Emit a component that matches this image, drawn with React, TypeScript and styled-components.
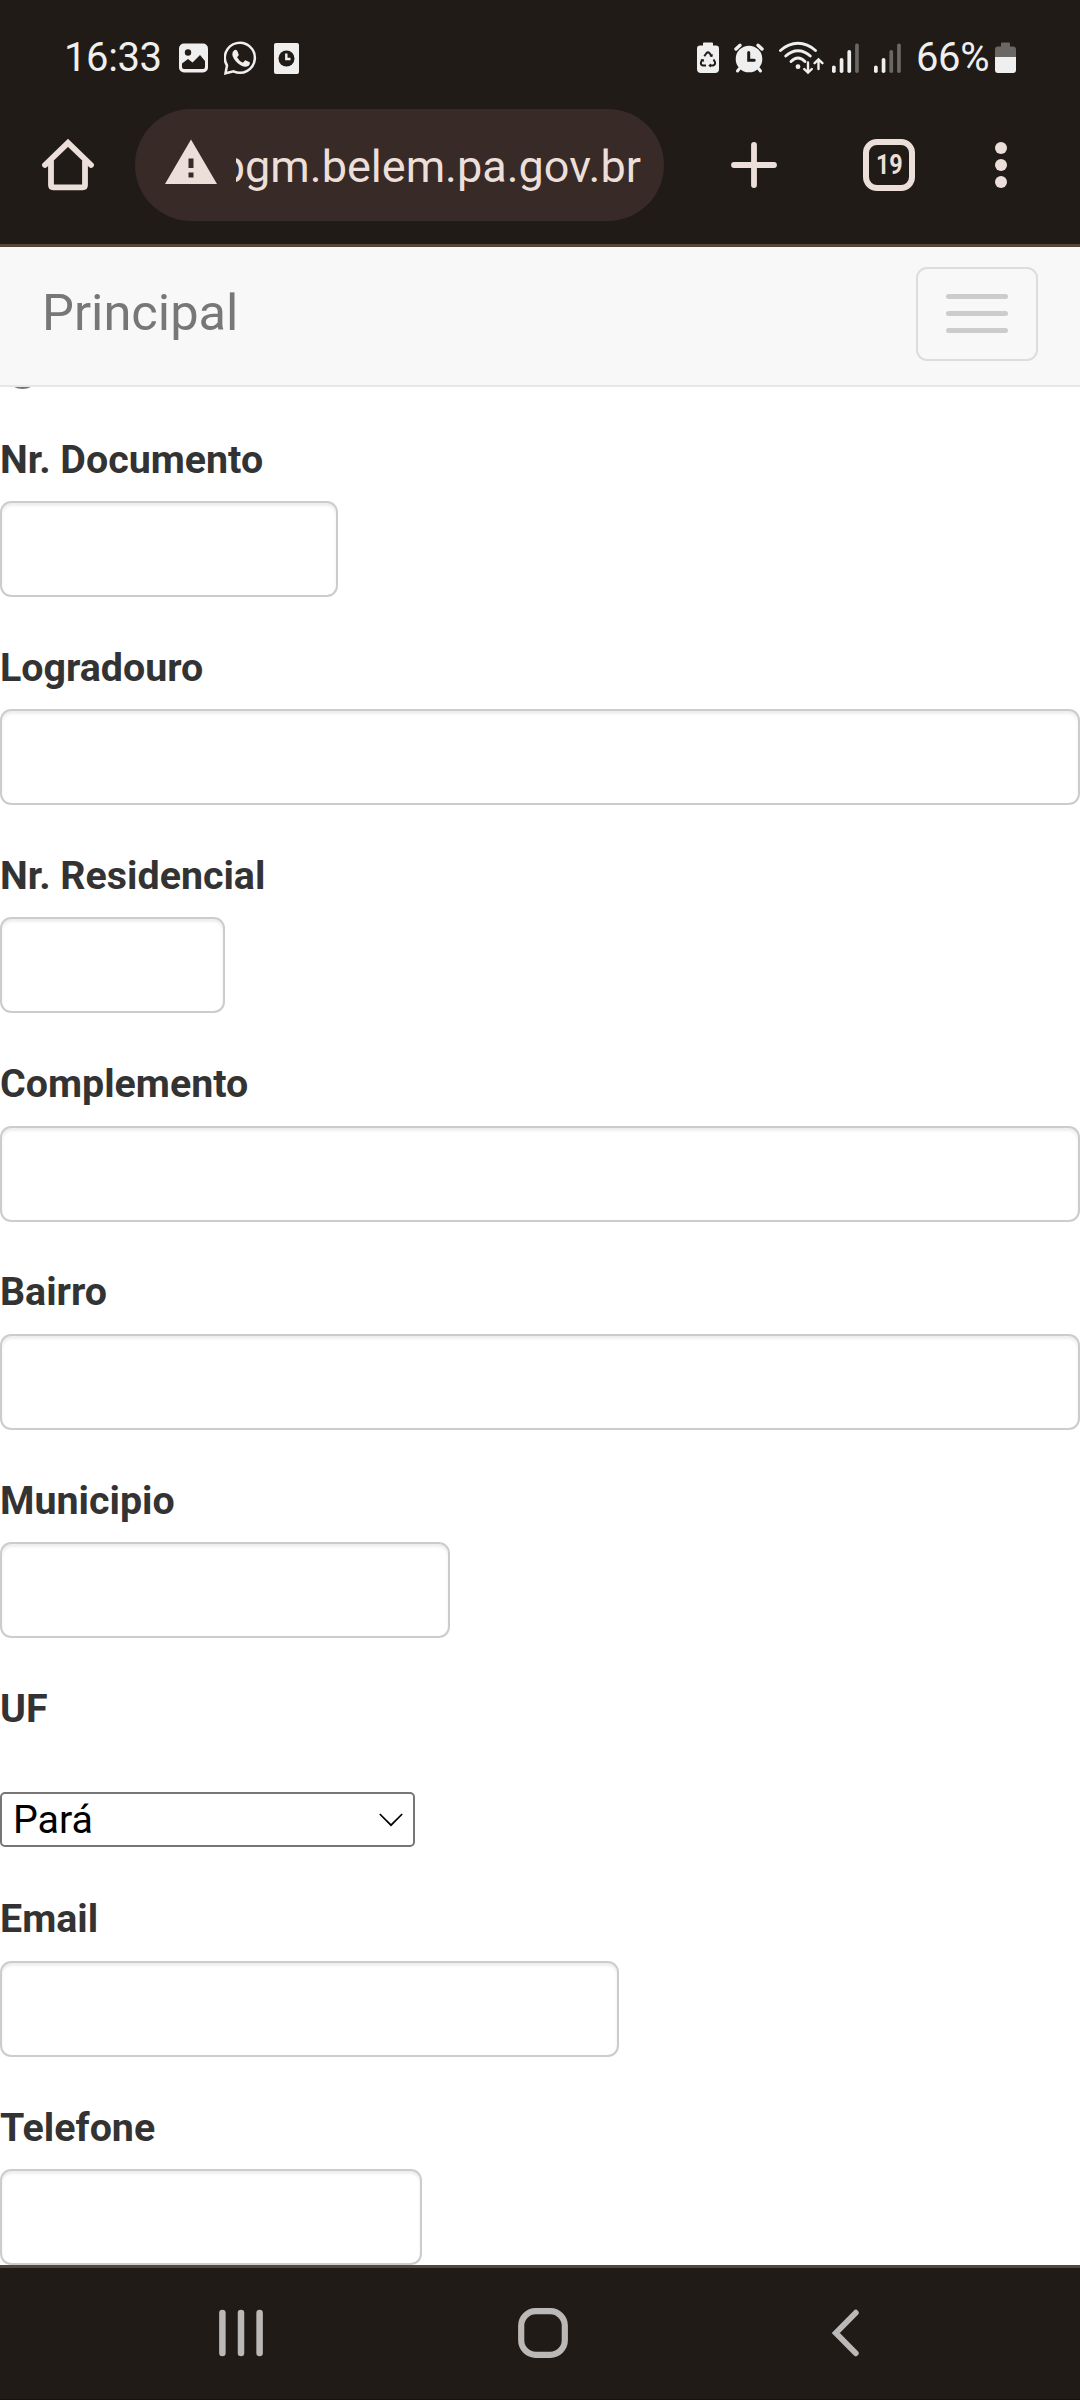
import React from 'react';
import styled, { createGlobalStyle } from 'styled-components';

const INK = '#efefef';
const CHROME = '#211b18';
const TINT = '#ecdfda';
const FAINT = '#6b6765';

const GlobalStyle = createGlobalStyle`
  *, *::before, *::after { box-sizing: border-box; }
  body {
    margin: 0;
    background: #fff;
    font-family: Roboto, "Noto Sans", sans-serif;
  }
  svg { display: block; flex: none; }
`;

const Screen = styled.div`
  width: 1080px;
  height: 2400px;
  display: flex;
  flex-direction: column;
  overflow: hidden;
  background: #fff;
`;

const StatusBar = styled.header`
  flex: none;
  height: 109px;
  padding: 36px 64px 0 64px;
  display: flex;
  justify-content: space-between;
  align-items: flex-start;
  background: ${CHROME};
`;

const StatusGroup = styled.div<{ $gap: number }>`
  height: 44px;
  display: flex;
  align-items: center;
  gap: ${(p) => p.$gap}px;
`;

const StatusText = styled.span<{ $width: number }>`
  width: ${(p) => p.$width}px;
  font-size: 40px;
  line-height: 44px;
  letter-spacing: -0.4px;
  white-space: nowrap;
  color: ${INK};
`;

const WifiSlot = styled.span`
  margin-right: -7px;
`;

const Toolbar = styled.div`
  flex: none;
  height: 138px;
  padding-left: 42px;
  display: flex;
  align-items: flex-start;
  background: ${CHROME};
  border-bottom: 3px solid #54453f;
`;

const ToolButton = styled.button<{ $width: number; $left: number }>`
  flex: none;
  width: ${(p) => p.$width}px;
  height: 112px;
  margin: 0 0 0 ${(p) => p.$left}px;
  padding: 0;
  border: 0;
  background: none;
  display: flex;
  align-items: center;
  justify-content: center;
`;

const AddressPill = styled.div`
  flex: none;
  width: 529px;
  height: 112px;
  margin-left: 41px;
  padding: 0 23px 0 30px;
  border-radius: 56px;
  background: #382a26;
  display: flex;
  align-items: center;
`;

const Address = styled.div`
  flex: 1;
  min-width: 0;
  margin-left: 19px;
  padding-top: 4px;
  display: flex;
  justify-content: flex-end;
  overflow: hidden;
  font-size: 45px;
  line-height: 60px;
  white-space: nowrap;
  color: ${TINT};
`;

const TabCount = styled.span`
  width: 52px;
  height: 52px;
  border: 6px solid ${TINT};
  border-radius: 14px;
  display: flex;
  align-items: center;
  justify-content: center;
  font-family: Roboto, sans-serif;
  font-size: 28.5px;
  font-weight: 700;
  line-height: 40px;
  color: ${TINT};
`;

const TabDigits = styled.span`
  transform: scaleX(0.82);
`;

const Page = styled.main`
  flex: 1;
  min-height: 0;
  overflow: hidden;
  color: #333;
`;

const SiteNav = styled.nav`
  height: 140px;
  padding: 0 42px;
  display: flex;
  align-items: flex-start;
  justify-content: space-between;
  background: #f8f8f8;
  border-bottom: 2px solid #e7e7e7;
`;

const Brand = styled.span`
  padding-top: 38.4px;
  font-size: 50.625px;
  line-height: 56px;
  color: #777;
`;

const Burger = styled.button`
  width: 122px;
  height: 94px;
  margin: 20px 0 0;
  padding: 0 0 2px;
  display: flex;
  flex-direction: column;
  align-items: center;
  justify-content: center;
  gap: 12px;
  background: none;
  border: 2px solid #ddd;
  border-radius: 11px;
`;

const BurgerLine = styled.span`
  width: 62px;
  height: 5px;
  border-radius: 2.5px;
  background: #ccc;
`;

const RadioStrip = styled.div`
  height: 43.8px;
  display: flex;
  align-items: flex-end;
  padding: 0 0 41.8px 4px;
  overflow: hidden;
`;

const RadioDot = styled.span`
  flex: none;
  width: 37px;
  height: 37px;
  border: 3px solid #767676;
  border-radius: 50%;
`;

const Group = styled.div`
  height: 165.96px;
  margin-bottom: 42.19px;
`;

const SelectGroup = styled(Group)`
  height: 168.6px;
`;

const Label = styled.label`
  display: block;
  margin-bottom: 13.31px;
  font-size: 39.375px;
  font-weight: 700;
  line-height: 57px;
`;

const Input = styled.input<{ $width: string }>`
  display: block;
  width: ${(p) => p.$width};
  height: 96px;
  padding: 17px 34px;
  font: 39.375px Roboto, sans-serif;
  color: #555;
  background: #fff;
  border: 2px solid #ccc;
  border-radius: 11.25px;
  outline: none;
  box-shadow: inset 0 2.8px 2.8px rgba(0, 0, 0, 0.075);
`;

const SelectBox = styled.div`
  width: 415px;
  height: 54.5px;
  margin-top: 55.8px;
  padding: 0 10px 0 11px;
  display: flex;
  align-items: center;
  border: 2px solid #767676;
  border-radius: 5px;
  background: #fff;
`;

const Select = styled.select`
  flex: 1;
  height: 50px;
  padding: 0;
  border: 0;
  outline: none;
  appearance: none;
  background: none;
  font: 39.375px/50px Roboto, sans-serif;
  color: #000;
`;

const SystemNav = styled.footer`
  flex: none;
  height: 135px;
  padding: 40px 219px 0;
  display: grid;
  grid-template-columns: 299px 313px 30px;
  align-items: start;
  background: ${CHROME};
  border-top: 3px solid #54463f;
  border-bottom: 1px solid #170f11;
`;

const PictureIcon = () => (
  <svg width="29" height="30" viewBox="0 0 29 30">
    <rect y="0.5" width="29" height="29" rx="5" fill={INK} />
    <circle cx="9" cy="9.5" r="3.2" fill={CHROME} />
    <path d="M3 20.5 9 16l4.500 3.500L21 12l5 6v6q0 2-2 2H5q-2 0-2-2z" fill={CHROME} />
  </svg>
);

const ChatIcon = () => (
  <svg width="34" height="34" viewBox="0 0 34 34" fill="none">
    <path d="M3 24.500A15 15 0 1 1 9.600 30.400L1.500 32.300z" stroke={INK} strokeWidth="2.500" />
    <path
      d="M10.200 9.300q1-.8 2.200-.3.600.3.900 1l1.400 3.400q.2.700-.4 1.400l-1.200 1.500q1.900 3.800 5.800 5.400l1.800-2q.5-.6 1.200-.3l3.400 1.600q.8.400.6 1.300-.6 3.100-3.900 3.400-4.300.2-8.500-3.700Q8.700 17.200 8.300 13.400q-.1-2.500 1.900-4.100z"
      fill={INK}
    />
  </svg>
);

const ClockCardIcon = () => (
  <svg width="25" height="31" viewBox="0 0 25 31">
    <rect width="25" height="31" rx="2" fill={INK} />
    <circle cx="12.500" cy="15.500" r="8" fill={CHROME} />
    <path d="M12.300 10.500v5.500h4.200" fill="none" stroke={INK} strokeWidth="2.400" />
  </svg>
);

const RecycleBatteryIcon = () => (
  <svg width="22" height="32" viewBox="0 0 22 32">
    <path d="M6 1.500q0-1 1-1h8q1 0 1 1v2h3q3 0 3 3V27q0 4-4 4H4q-4 0-4-4V6.500q0-3 3-3h3z" fill={INK} />
    <g fill="none" stroke={CHROME} strokeWidth="2" strokeLinejoin="round">
      <path d="M7.300 14.300 9.600 11q1.400-1.300 2.800 0l2.300 3.200" />
      <path d="M16.600 17.500 18 20.200q.6 2.800-2.300 3.300h-3" />
      <path d="M9 23.500H6q-2.700-.6-2-3.200l1.500-2.800" />
    </g>
    <path d="M3.300 17.800l3.300-.8.600 3zM14 21.500v4l-2.800-2zM15.800 12l-.5 3.300-3-1.200z" fill={CHROME} />
  </svg>
);

const AlarmIcon = () => (
  <svg width="30" height="30" viewBox="0 0 30 30" fill="none" stroke={INK} strokeLinecap="round">
    <circle cx="15" cy="16" r="13.300" fill={INK} stroke="none" />
    <path d="M2 6 6 2.300M28 6l-4-3.700" strokeWidth="3.400" />
    <path d="M5.500 25.500 3.500 28M24.500 25.500l2 2.500" strokeWidth="3" />
    <path d="M14.700 9.500v7.700h5.500" stroke={CHROME} strokeWidth="3" />
  </svg>
);

const WifiIcon = () => (
  <svg width="45" height="34" viewBox="0 0 45 34" fill="none" stroke={INK} strokeLinecap="round">
    <path d="M1.500 9.500Q9.500 2.200 19 2.200T36.500 9.500" strokeWidth="2.900" />
    <path d="M6.700 15Q12.500 9.700 19 9.700T31.300 15" strokeWidth="2.900" />
    <path d="M12 20.500Q15.500 17 19 17t7 3.500" strokeWidth="2.900" />
    <circle cx="19" cy="25.700" r="2.400" fill={INK} stroke="none" />
    <path d="M29 21.500v9M25.200 28l3.800 3.700 3.800-3.700M39.500 28v-9M35.600 22.200l3.900-3.800 3.900 3.800" strokeWidth="2.400" />
  </svg>
);

const BARS = [7.5, 15, 23, 29.5];

const SignalIcon = ({ level }: { level: number }) => (
  <svg width="27" height="30" viewBox="0 0 27 30">
    {BARS.map((h, i) => (
      <rect key={h} x={i * 7.7} y={30 - h} width="3.700" height={h} rx="1.800" fill={i < level ? INK : FAINT} />
    ))}
  </svg>
);

const BatteryIcon = () => (
  <svg width="21" height="32" viewBox="0 0 21 32">
    <path d="M6 1.500q0-1 1-1h7q1 0 1 1v3h3q3 0 3 3V15H0V7.500q0-3 3-3h3z" fill={FAINT} />
    <path d="M0 15h21v13q0 3-3 3H3q-3 0-3-3z" fill={INK} />
  </svg>
);

const HomeIcon = () => (
  <svg width="52" height="52" viewBox="0 0 52 52" fill="none" stroke={TINT} strokeWidth="5.800">
    <path d="M3 26 26 3.800 49 26" strokeLinecap="round" />
    <path d="M9 21.500V46q0 2.300 2.300 2.300h29.400Q43 48.300 43 46V21.500" />
  </svg>
);

const WarningIcon = () => (
  <svg width="52" height="52" viewBox="0 0 52 52">
    <path d="M26 0.500 52 45H0z" fill={TINT} />
    <path d="M23.500 19.500h5v9.500h-5zM23.500 33.500h5v5h-5z" fill="#382a26" />
  </svg>
);

const PlusIcon = () => (
  <svg width="46" height="46" viewBox="0 0 46 46" stroke={TINT} strokeWidth="5.800" strokeLinecap="round">
    <path d="M23 3v40M3 23h40" />
  </svg>
);

const MoreIcon = () => (
  <svg width="12" height="46" viewBox="0 0 12 46" fill={TINT}>
    <circle cx="6" cy="6" r="6" />
    <circle cx="6" cy="23" r="6" />
    <circle cx="6" cy="40" r="6" />
  </svg>
);

const Chevron = () => (
  <svg width="24" height="14" viewBox="0 0 24 14" fill="none" stroke="#000" strokeWidth="1.700">
    <path d="M.8 1 12 12.200 23.200 1" />
  </svg>
);

const RecentsIcon = () => (
  <svg width="44" height="50" viewBox="0 0 44 50" stroke="#bbb9b7" strokeWidth="6.500" strokeLinecap="round">
    <path d="M3.400 4.900v40.200M22 4.900v40.200M40.600 4.900v40.200" />
  </svg>
);

const HomeKeyIcon = () => (
  <svg width="50" height="50" viewBox="0 0 50 50" fill="none" stroke="#bbb9b7" strokeWidth="6.200">
    <rect x="3.200" y="3.200" width="43.600" height="43.600" rx="14.500" />
  </svg>
);

const BackIcon = () => (
  <svg width="30" height="50" viewBox="0 0 30 50" fill="none" stroke="#bbb9b7" strokeWidth="5.800" strokeLinecap="round">
    <path d="M24.800 4.700 4.800 25l20 20.300" />
  </svg>
);

const Field = ({ label, width }: { label: string; width: string }) => (
  <Group>
    <Label>{label}</Label>
    <Input type="text" $width={width} />
  </Group>
);

const ADDRESS_FIELDS = [
  { label: 'Nr. Documento', width: '338px' },
  { label: 'Logradouro', width: '100%' },
  { label: 'Nr. Residencial', width: '225px' },
  { label: 'Complemento', width: '100%' },
  { label: 'Bairro', width: '100%' },
  { label: 'Municipio', width: '450px' },
];

const CONTACT_FIELDS = [
  { label: 'Email', width: '619px' },
  { label: 'Telefone', width: '422px' },
];

export default function App() {
  return (
    <Screen>
      <GlobalStyle />
      <StatusBar>
        <StatusGroup $gap={16}>
          <StatusText $width={99}>16:33</StatusText>
          <PictureIcon />
          <ChatIcon />
          <ClockCardIcon />
        </StatusGroup>
        <StatusGroup $gap={15}>
          <RecycleBatteryIcon />
          <AlarmIcon />
          <WifiSlot>
            <WifiIcon />
          </WifiSlot>
          <SignalIcon level={3} />
          <SignalIcon level={2} />
          <StatusText $width={64}>66%</StatusText>
          <BatteryIcon />
        </StatusGroup>
      </StatusBar>
      <Toolbar>
        <ToolButton $width={52} $left={0} aria-label="Home">
          <HomeIcon />
        </ToolButton>
        <AddressPill>
          <WarningIcon />
          <Address>pgm.belem.pa.gov.br</Address>
        </AddressPill>
        <ToolButton $width={46} $left={67} aria-label="New tab">
          <PlusIcon />
        </ToolButton>
        <ToolButton $width={52} $left={86} aria-label="Tabs">
          <TabCount>
            <TabDigits>19</TabDigits>
          </TabCount>
        </ToolButton>
        <ToolButton $width={12} $left={80} aria-label="Menu">
          <MoreIcon />
        </ToolButton>
      </Toolbar>
      <Page>
        <SiteNav>
          <Brand>Principal</Brand>
          <Burger aria-label="Menu">
            <BurgerLine />
            <BurgerLine />
            <BurgerLine />
          </Burger>
        </SiteNav>
        <RadioStrip>
          <RadioDot />
        </RadioStrip>
        {ADDRESS_FIELDS.map((f) => (
          <Field key={f.label} {...f} />
        ))}
        <SelectGroup>
          <Label>UF</Label>
          <SelectBox>
            <Select defaultValue="PA">
              <option value="PA">Pará</option>
            </Select>
            <Chevron />
          </SelectBox>
        </SelectGroup>
        {CONTACT_FIELDS.map((f) => (
          <Field key={f.label} {...f} />
        ))}
      </Page>
      <SystemNav>
        <RecentsIcon />
        <HomeKeyIcon />
        <BackIcon />
      </SystemNav>
    </Screen>
  );
}
